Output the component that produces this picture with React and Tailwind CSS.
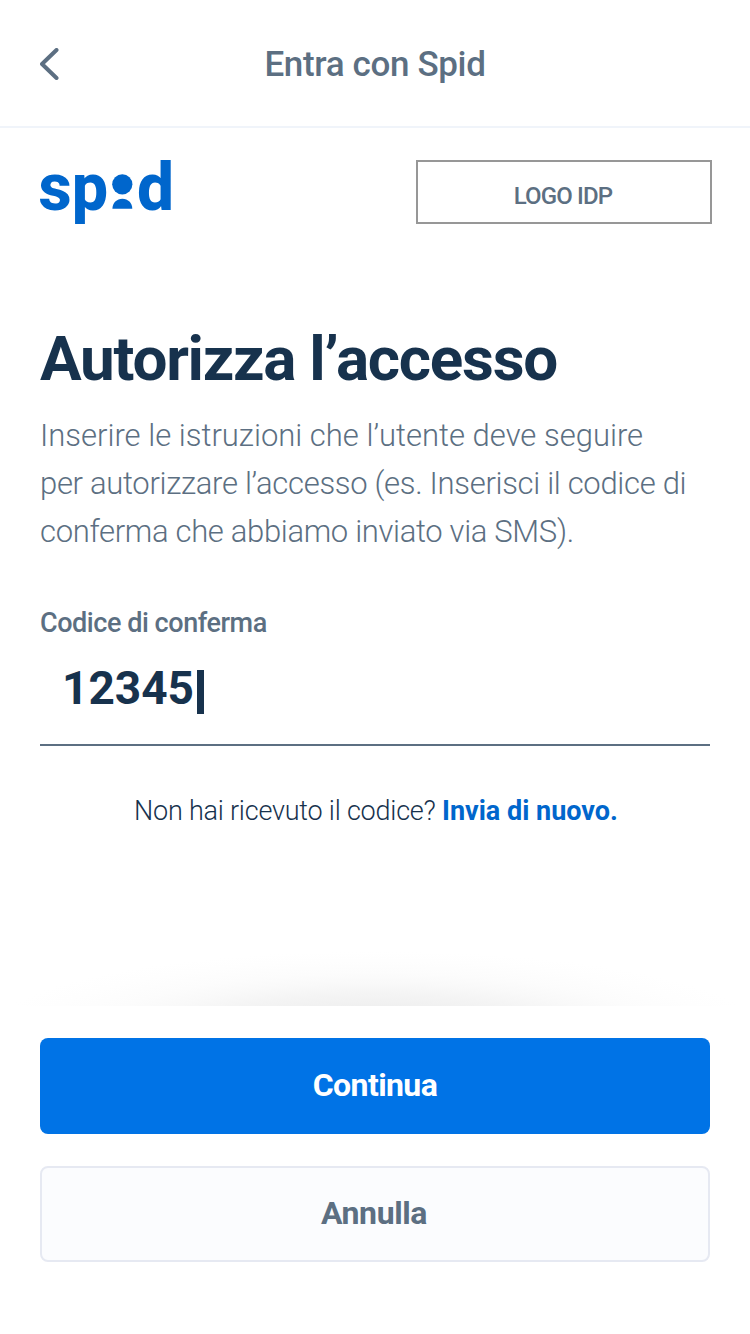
function BackIcon() {
  return (
    <svg className="h-8 w-5" viewBox="0 0 20 32" fill="none">
      <path d="M16.5 2 2 16l14.5 14" stroke="#5C6F82" strokeWidth="4" strokeLinecap="round" strokeLinejoin="round" />
    </svg>
  );
}

function SpidLogo() {
  return (
    <svg className="h-16 w-[132px] overflow-visible font-[Roboto,sans-serif]" viewBox="0 0 132 64" fill="#0066CC" role="img" aria-label="spid">
      <text x="-1.5" y="49.5" fontSize="66" fontWeight="800" textLength="69.5" lengthAdjust="spacingAndGlyphs">sp</text>
      <circle cx="82.3" cy="24.3" r="10.1" />
      <path d="M72.4 48.7c0-5.7 4.4-10 10-10s9.9 4.3 9.9 10z" />
      <text x="97" y="49.5" fontSize="66" fontWeight="800" textLength="37" lengthAdjust="spacingAndGlyphs">d</text>
    </svg>
  );
}

export default function App() {
  return (
    <div className="flex h-[1334px] w-[750px] flex-col overflow-hidden bg-white font-[Roboto,sans-serif] text-[#5C6F82]">
      <header className="grid h-32 grid-cols-[1fr_auto_1fr] items-center border-b-2 border-[#F0F4FA] px-10">
        <button className="justify-self-start pt-0.5" aria-label="Indietro">
          <BackIcon />
        </button>
        <h1 className="pt-0.5 text-[35px] leading-none font-medium tracking-[-0.35px]">Entra con Spid</h1>
      </header>

      <main className="flex flex-1 flex-col px-10 pt-8">
        <div className="-mr-0.5 flex items-start justify-between">
          <SpidLogo />
          <div className="flex h-16 w-[296px] items-center justify-center border-2 border-[#979797] pt-2 pr-0.5 text-2xl leading-none font-medium tracking-[-0.85px]">
            LOGO IDP
          </div>
        </div>

        <h2 className="mt-[95px] h-20 text-[62px] leading-[80px] font-bold tracking-[-1.27px] whitespace-nowrap text-[#17324D]">Autorizza l’accesso</h2>
        <p className="mt-[13px] text-[31px] leading-[48px] font-light whitespace-nowrap">
          <span className="block">Inserire le istruzioni che l’utente deve seguire</span>
          <span className="block tracking-[-0.31px]">per autorizzare l’accesso (es. Inserisci il codice di</span>
          <span className="block tracking-[-0.33px]">conferma che abbiamo inviato via SMS).</span>
        </p>

        <div className="mt-[51px] text-[27px] leading-[32px] font-medium tracking-[-0.45px]">Codice di conferma</div>
        <div className="mt-1.5 flex h-[101px] items-start border-b-2 border-[#5C6F82] pt-[17px] pl-[22px] text-[46px] leading-[52px] font-bold text-[#17324D]">
          <span>12345</span>
          <span className="mt-2 ml-[3px] h-11 w-[7px] bg-[#17324D]" />
        </div>

        <p className="mt-12 pl-0.5 text-center text-[27px] leading-[34px] font-light whitespace-nowrap text-[#17324D]">
          <span className="tracking-[-0.22px]">Non hai ricevuto il codice? </span>
          <a className="font-bold text-[#0066CC]">Invia di nuovo.</a>
        </p>
      </main>

      <div className="h-[60px] bg-[radial-gradient(385px_80px_at_50%_85px,#efefef_0%,#f0f0f0_31%,#f4f4f4_46%,#f9f9f9_60%,#fcfcfc_72%,#fefefe_88%,#ffffff_100%)]" />
      <footer className="flex h-[328px] flex-col gap-8 px-10 pt-8 text-[32px] leading-none font-bold">
        <button className="h-24 rounded-lg bg-[#0073E6] pb-0.5 tracking-[-0.6px] text-white">Continua</button>
        <button className="h-24 rounded-lg border-2 border-[#E6E9F2] bg-[#FBFCFE] pr-0.5 pb-0.5 tracking-[-0.4px]">Annulla</button>
      </footer>
    </div>
  );
}
